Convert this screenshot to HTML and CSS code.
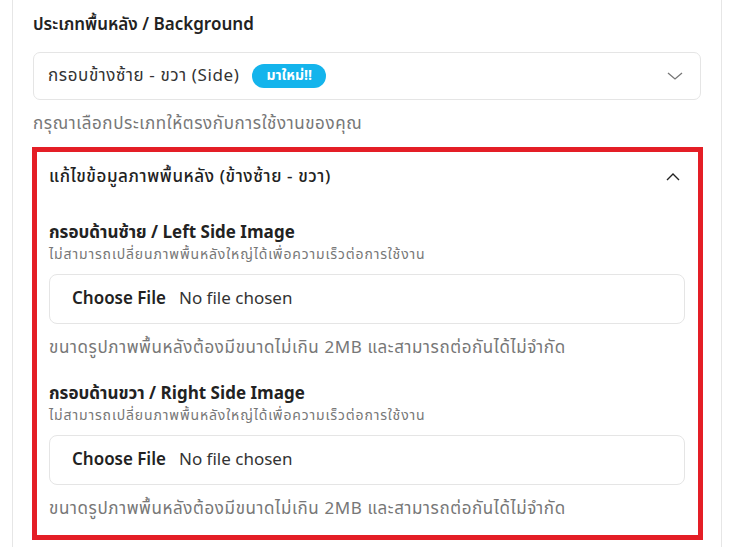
FILE: index.html
```html
<!DOCTYPE html>
<html lang="th">
<head>
<meta charset="utf-8">
<title>Background</title>
<link rel="stylesheet" href="styles.css">
</head>
<body>
<div class="panel">
  <div class="field-label">ประเภทพื้นหลัง / Background</div>
  <div class="select">
    <span class="select-text">กรอบข้างซ้าย - ขวา (Side)</span>
    <span class="badge">มาใหม่!!</span>
    <svg class="chev-down" width="16" height="8" viewBox="0 0 16 8"><path d="M1 1 L8 7 L15 1" fill="none" stroke="#777" stroke-width="1.3"/></svg>
  </div>
  <div class="help">กรุณาเลือกประเภทให้ตรงกับการใช้งานของคุณ</div>

  <div class="edit-box">
    <div class="edit-head">
      <span class="edit-title">แก้ไขข้อมูลภาพพื้นหลัง (ข้างซ้าย - ขวา)</span>
      <svg class="chev-up" width="14" height="8" viewBox="0 0 14 8"><path d="M1 7 L7 1 L13 7" fill="none" stroke="#222" stroke-width="1.4"/></svg>
    </div>

    <div class="group">
      <div class="group-title">กรอบด้านซ้าย / Left Side Image</div>
      <div class="group-sub">ไม่สามารถเปลี่ยนภาพพื้นหลังใหญ่ได้เพื่อความเร็วต่อการใช้งาน</div>
      <div class="file">
        <span class="file-btn">Choose File</span>
        <span class="file-name">No file chosen</span>
      </div>
      <div class="help">ขนาดรูปภาพพื้นหลังต้องมีขนาดไม่เกิน 2MB และสามารถต่อกันได้ไม่จำกัด</div>
    </div>

    <div class="group">
      <div class="group-title">กรอบด้านขวา / Right Side Image</div>
      <div class="group-sub">ไม่สามารถเปลี่ยนภาพพื้นหลังใหญ่ได้เพื่อความเร็วต่อการใช้งาน</div>
      <div class="file">
        <span class="file-btn">Choose File</span>
        <span class="file-name">No file chosen</span>
      </div>
      <div class="help">ขนาดรูปภาพพื้นหลังต้องมีขนาดไม่เกิน 2MB และสามารถต่อกันได้ไม่จำกัด</div>
    </div>
  </div>
</div>
</body>
</html>
```
FILE: styles.css
```css
* { box-sizing: border-box; }
html, body { margin: 0; padding: 0; background: #fff; }
body {
  font-family: "Noto Sans Thai", "Noto Sans", "Open Sans", sans-serif;
  font-size: 17px;
  color: #222;
  height: 547px;
  overflow: hidden;
}
.panel {
  margin-left: 12px;
  width: 710px;
  min-height: 547px;
  border-left: 1px solid #e6e6e6;
  border-right: 1px solid #e6e6e6;
  padding: 13px 20px 0 20px;
}
.field-label {
  font-weight: 600;
  line-height: 24px;
  color: #222;
}
.select {
  margin-top: 15px;
  height: 48px;
  border: 1px solid #e5e5e5;
  border-radius: 7px;
  display: flex;
  align-items: center;
  padding: 0 17px 0 14px;
  width: 668px;
}
.select-text { color: #333; letter-spacing: 0.6px; }
.badge {
  margin-left: 13px;
  background: #14b4ec;
  color: #fff;
  font-size: 14px;
  font-weight: 700;
  height: 24px;
  line-height: 24px;
  padding: 0 14px;
  border-radius: 12px;
}
.chev-down { margin-left: auto; }
.help {
  margin-top: 12px;
  color: #777;
  line-height: 24px;
  letter-spacing: 0.6px;
}
.edit-box {
  margin-top: 11px;
  width: 671px;
  margin-left: -1px;
  border: 5px solid #e41e26;
  padding: 7px 13px 14px 12px;
}
.edit-head {
  display: flex;
  align-items: center;
  justify-content: space-between;
  height: 36px;
  padding-right: 5px;
}
.edit-title { font-weight: 500; color: #222; letter-spacing: 0.6px; }
.group { margin-top: 27px; }
.group + .group { margin-top: 23px; }
.group-title {
  font-weight: 700;
  line-height: 22px;
  color: #222;
}
.group-sub {
  font-size: 14px;
  color: #777;
  line-height: 18px;
  margin-top: 2px;
  letter-spacing: 0.85px;
}
.file {
  margin-top: 10px;
  height: 50px;
  border: 1px solid #e5e5e5;
  border-radius: 8px;
  display: flex;
  align-items: center;
  padding-left: 22px;
}
.file-btn { font-weight: 600; color: #222; }
.file-name { margin-left: 13px; color: #333; }
.group .help { margin-top: 12px; }
```
